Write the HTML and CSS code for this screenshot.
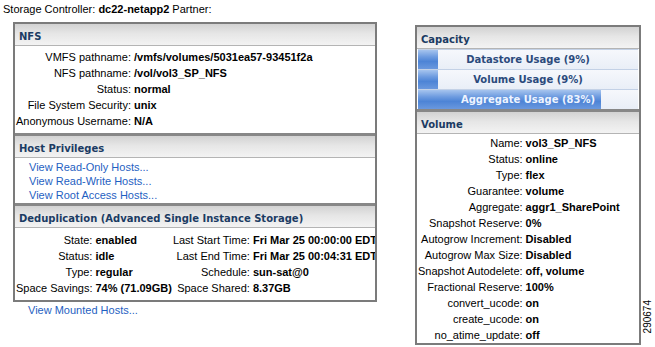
FILE: index.html
```html
<!DOCTYPE html>
<html>
<head>
<meta charset="utf-8">
<link rel="stylesheet" href="styles.css">
</head>
<body>
<div class="topline">Storage Controller: <b>dc22-netapp2</b> Partner:</div>
<div class="main">
  <div class="leftcol">
    <div class="box">
      <div class="hdr first">NFS</div>
      <div class="body pad-nfs">
        <table class="kv">
          <tr><td class="k">VMFS pathname:</td><td class="v">/vmfs/volumes/5031ea57-93451f2a</td></tr>
          <tr><td class="k">NFS pathname:</td><td class="v">/vol/vol3_SP_NFS</td></tr>
          <tr><td class="k">Status:</td><td class="v">normal</td></tr>
          <tr><td class="k">File System Security:</td><td class="v">unix</td></tr>
          <tr><td class="k">Anonymous Username:</td><td class="v">N/A</td></tr>
        </table>
      </div>
      <div class="hdr">Host Privileges</div>
      <div class="body links">
        <a class="lnk">View Read-Only Hosts...</a>
        <a class="lnk">View Read-Write Hosts...</a>
        <a class="lnk">View Root Access Hosts...</a>
      </div>
      <div class="hdr">Deduplication (Advanced Single Instance Storage)</div>
      <div class="body pad-dedup">
        <table class="kv dedup">
          <tr><td class="k">State:</td><td class="v">enabled</td><td class="k">Last Start Time:</td><td class="v">Fri Mar 25 00:00:00 EDT 2011</td></tr>
          <tr><td class="k">Status:</td><td class="v">idle</td><td class="k">Last End Time:</td><td class="v">Fri Mar 25 00:04:31 EDT 2011</td></tr>
          <tr><td class="k">Type:</td><td class="v">regular</td><td class="k">Schedule:</td><td class="v">sun-sat@0</td></tr>
          <tr><td class="k">Space Savings:</td><td class="v">74% (71.09GB)</td><td class="k">Space Shared:</td><td class="v">8.37GB</td></tr>
        </table>
      </div>
    </div>
    <a class="lnk mounted">View Mounted Hosts...</a>
  </div>
  <div class="box rightbox">
    <div class="hdr first">Capacity</div>
    <div class="bars">
      <div class="bar"><div class="fill" style="width:9%"></div><span class="bartext">Datastore Usage (9%)</span></div>
      <div class="bar"><div class="fill" style="width:9%"></div><span class="bartext">Volume Usage (9%)</span></div>
      <div class="bar"><div class="fill" style="width:83%"></div><span class="bartext light">Aggregate Usage (83%)</span></div>
    </div>
    <div class="hdr">Volume</div>
    <div class="body pad-vol">
      <table class="kv">
        <tr><td class="k">Name:</td><td class="v">vol3_SP_NFS</td></tr>
        <tr><td class="k">Status:</td><td class="v">online</td></tr>
        <tr><td class="k">Type:</td><td class="v">flex</td></tr>
        <tr><td class="k">Guarantee:</td><td class="v">volume</td></tr>
        <tr><td class="k">Aggregate:</td><td class="v">aggr1_SharePoint</td></tr>
        <tr><td class="k">Snapshot Reserve:</td><td class="v">0%</td></tr>
        <tr><td class="k">Autogrow Increment:</td><td class="v">Disabled</td></tr>
        <tr><td class="k">Autogrow Max Size:</td><td class="v">Disabled</td></tr>
        <tr><td class="k">Snapshot Autodelete:</td><td class="v">off, volume</td></tr>
        <tr><td class="k">Fractional Reserve:</td><td class="v">100%</td></tr>
        <tr><td class="k">convert_ucode:</td><td class="v">on</td></tr>
        <tr><td class="k">create_ucode:</td><td class="v">on</td></tr>
        <tr><td class="k">no_atime_update:</td><td class="v">off</td></tr>
      </table>
    </div>
  </div>
</div>
<div class="figno">290674</div>
</body>
</html>
```
FILE: styles.css
```css
html, body {
  margin: 0;
  padding: 0;
  background: #ffffff;
}
body {
  font-family: "Liberation Sans", Arial, sans-serif;
  font-size: 11px;
  color: #000;
  width: 655px;
  height: 347px;
  overflow: hidden;
  position: relative;
}
.topline {
  padding: 2px 3px 0 3px;
  height: 14px;
  line-height: 14px;
}
.topline b {
  font-weight: bold;
}
.main {
  display: flex;
  align-items: flex-start;
  margin-top: 6px;
  padding-left: 13px;
  gap: 38px;
}
.leftcol {
  width: 364px;
  display: flex;
  flex-direction: column;
}
.box {
  border: 2px solid #7b7b7b;
  overflow: hidden;
  background: #fff;
}
.rightbox {
  width: 222px;
  margin-top: 3px;
}
.hdr {
  height: 19px;
  padding-top: 2px;
  line-height: 21px;
  padding-left: 4px;
  font-family: "DejaVu Sans", Verdana, sans-serif;
  font-weight: bold;
  font-size: 10px;
  color: #1b3b63;
  background: linear-gradient(to bottom, #d2d2d2 0%, #e6e6e6 45%, #f3f3f3 100%);
  border-top: 3px solid #878787;
  border-bottom: 1px solid #b4b4b4;
  white-space: nowrap;
}
.hdr.first {
  border-top: 0;
}
.body {
  background: #fff;
}
.pad-nfs {
  padding: 3px 0 4px 0;
}
.pad-dedup {
  padding: 4px 0 4px 0;
}
.pad-vol {
  padding: 1px 0 0 0;
}
.kv {
  border-collapse: collapse;
  white-space: nowrap;
}
.kv td {
  padding: 0;
  height: 16px;
  line-height: 16px;
}
.kv td.k {
  text-align: right;
  padding-left: 1px;
}
.kv td.v {
  text-align: left;
  font-weight: bold;
  padding-left: 3px;
  padding-right: 3px;
}
.dedup td.v {
  padding-right: 0;
}
.links {
  padding: 2px 0 1px 14px;
  display: flex;
  flex-direction: column;
}
.lnk {
  color: #1f5fc2;
  line-height: 14px;
  height: 14px;
  text-decoration: none;
}
.mounted {
  padding-left: 15px;
  margin-top: 1px;
}
.bars {
  display: flex;
  flex-direction: column;
}
.bar {
  position: relative;
  height: 19px;
  border-top: 1px solid #c3d1e6;
  background: linear-gradient(to bottom, #f6f8fc 0%, #e9eef7 100%);
  margin: 0 1px;
}
.fill {
  height: 100%;
  background: linear-gradient(to bottom, #a6c4ee 0%, #6e9ce0 35%, #4d84d6 60%, #6a98de 100%);
}
.bartext {
  position: absolute;
  left: 0;
  right: 0;
  top: 0;
  line-height: 20px;
  text-align: center;
  font-family: "DejaVu Sans", Verdana, sans-serif;
  font-weight: bold;
  font-size: 10px;
  color: #2b4a7c;
  white-space: nowrap;
}
.bartext.light {
  color: #eef4ff;
}
.figno {
  position: absolute;
  left: 643px;
  top: 300px;
  writing-mode: vertical-rl;
  transform: rotate(180deg);
  font-size: 10px;
  line-height: 10px;
  color: #000;
}
```
